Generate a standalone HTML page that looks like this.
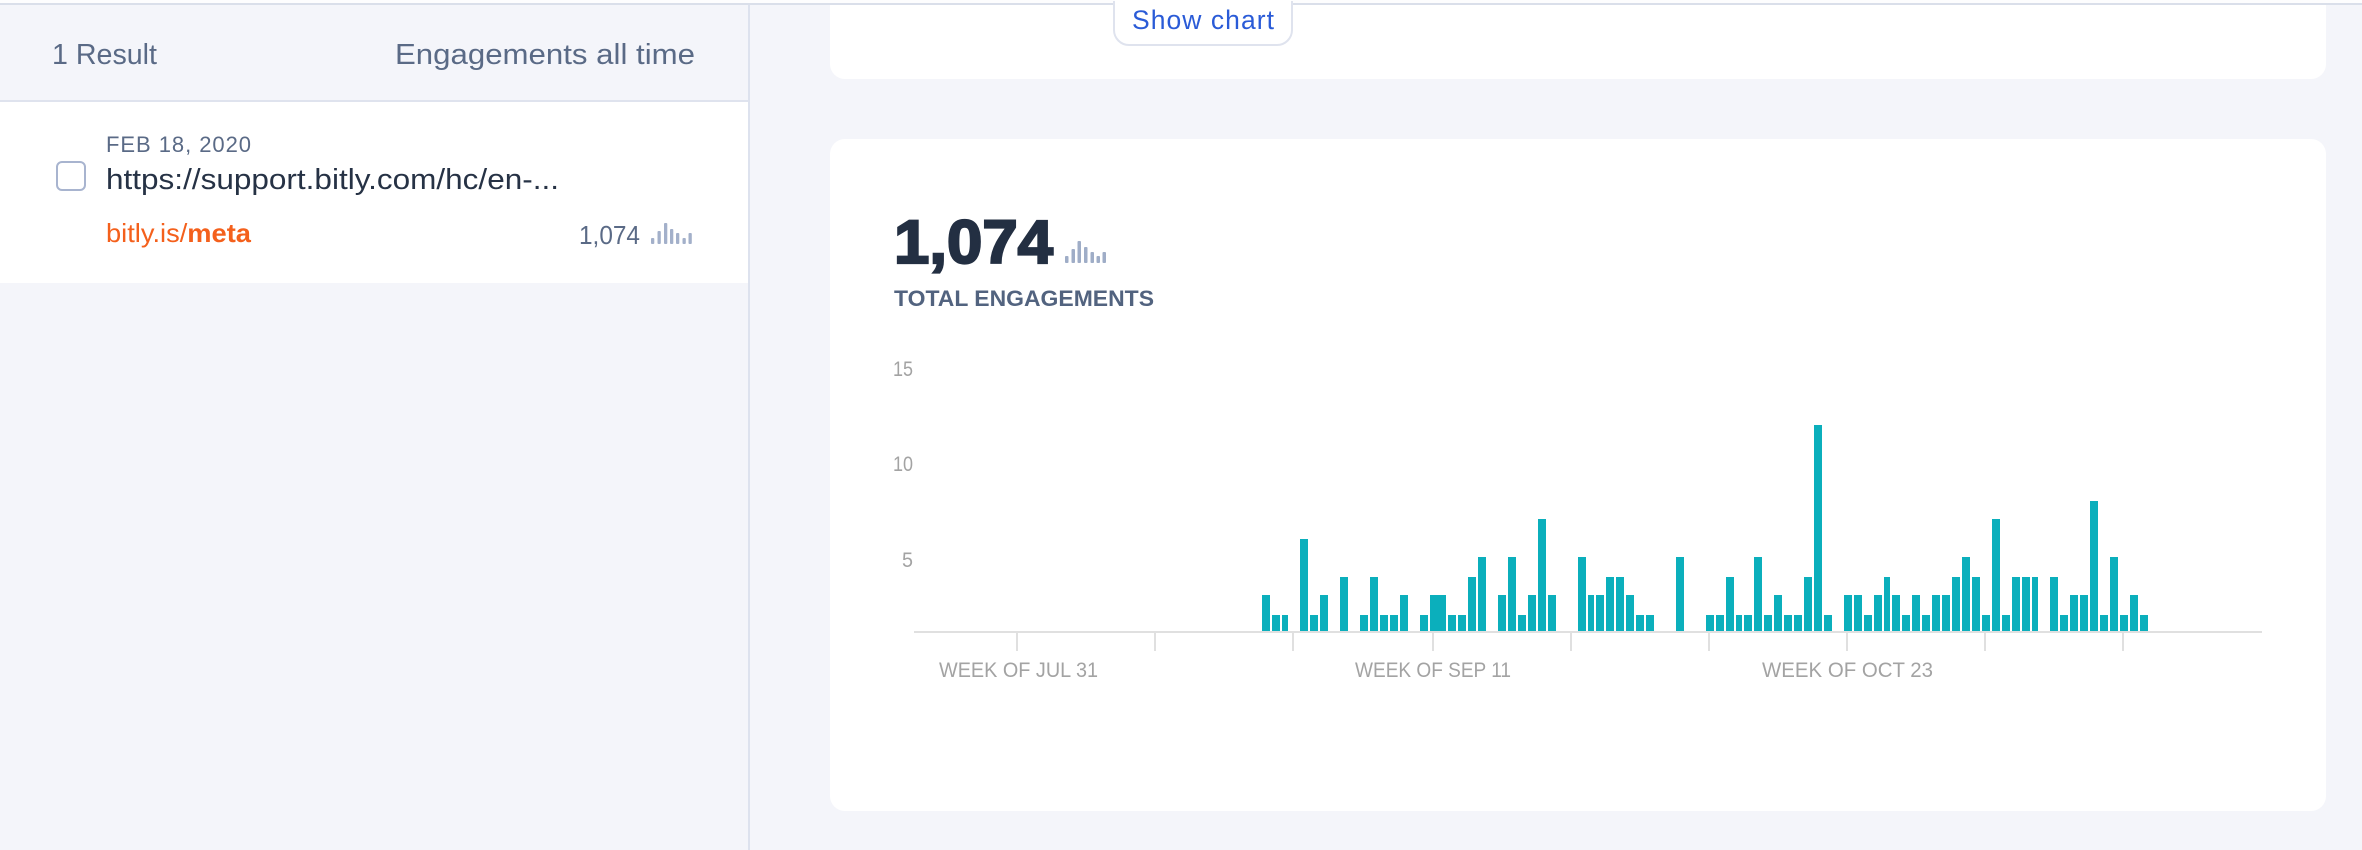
<!DOCTYPE html>
<html lang="en">
<head>
<meta charset="utf-8">
<title>Engagements</title>
<style>
html,body{margin:0;padding:0;width:2362px;height:850px;overflow:hidden;background:#f4f5fa}
svg{display:block;position:absolute;left:0;top:0}
text{font-family:"Liberation Sans",sans-serif}
</style>
</head>
<body>
<svg width="2362" height="850" viewBox="0 0 2362 850" xmlns="http://www.w3.org/2000/svg">
<rect x="0" y="0" width="2362" height="850" fill="#f4f5fa"/>
<rect x="0" y="0" width="2362" height="3" fill="#fdfdfe"/>
<rect x="0" y="3" width="2362" height="2" fill="#dadfea"/>
<rect x="748" y="5" width="2" height="845" fill="#dde2ee"/>
<rect x="0" y="100" width="748" height="2" fill="#dfe3ee"/>
<rect x="0" y="102" width="748" height="181" fill="#ffffff"/>
<text x="52" y="64" font-size="29" fill="#5a6a86" textLength="105" lengthAdjust="spacingAndGlyphs">1 Result</text>
<text x="395" y="64" font-size="29" fill="#5a6a86" textLength="300" lengthAdjust="spacingAndGlyphs">Engagements all time</text>
<text x="106" y="152" font-size="22" fill="#5a6a86" textLength="145" lengthAdjust="spacing">FEB 18, 2020</text>
<text x="106" y="189" font-size="29" fill="#263245" textLength="453" lengthAdjust="spacingAndGlyphs">https://support.bitly.com/hc/en-...</text>
<text x="106" y="242" font-size="26" fill="#f4601c" textLength="145" lengthAdjust="spacingAndGlyphs">bitly.is/<tspan font-weight="bold">meta</tspan></text>
<text x="579" y="244" font-size="26" fill="#5a6a86" textLength="61" lengthAdjust="spacingAndGlyphs">1,074</text>
<rect x="57" y="162" width="28" height="28" rx="5" ry="5" fill="#ffffff" stroke="#a8b4cf" stroke-width="2"/>
<g fill="#a3b0ca">
<rect x="651" y="238" width="3.3" height="6" rx="1"/><rect x="657.5" y="231" width="3.3" height="13" rx="1"/><rect x="664" y="223" width="3.3" height="21" rx="1"/><rect x="670" y="229" width="3.3" height="15" rx="1"/><rect x="676" y="233" width="3.3" height="11" rx="1"/><rect x="682.5" y="238" width="3.3" height="6" rx="1"/><rect x="688.5" y="233" width="3.3" height="11" rx="1"/>
</g>
<path d="M830 5H2326V64a15 15 0 0 1-15 15H845a15 15 0 0 1-15-15Z" fill="#ffffff"/>
<path d="M1114 1V30a15 15 0 0 0 15 15H1277a15 15 0 0 0 15-15V1" fill="#ffffff" stroke="#dfe3ee" stroke-width="2"/>
<rect x="1115" y="0" width="176" height="5" fill="#ffffff"/>
<text x="1132" y="29" font-size="26.5" fill="#2a5bd7" textLength="142" lengthAdjust="spacing">Show chart</text>
<rect x="830" y="139" width="1496" height="672" rx="15" ry="15" fill="#ffffff"/>
<text x="894" y="263" font-size="61" font-weight="bold" fill="#232f42" stroke="#232f42" stroke-width="2.2" textLength="159" lengthAdjust="spacingAndGlyphs">1,074</text>
<g fill="#9fadc7">
<rect x="1065" y="256" width="3.5" height="7" rx="1"/><rect x="1071.5" y="249" width="3.5" height="14" rx="1"/><rect x="1077.5" y="241" width="3.5" height="22" rx="1"/><rect x="1084" y="247" width="3.5" height="16" rx="1"/><rect x="1090.5" y="252" width="3.5" height="11" rx="1"/><rect x="1096.5" y="256" width="3.5" height="7" rx="1"/><rect x="1102.5" y="252" width="3.5" height="11" rx="1"/>
</g>
<text x="894" y="306" font-size="22" font-weight="bold" fill="#52637f" textLength="260" lengthAdjust="spacingAndGlyphs">TOTAL ENGAGEMENTS</text>
<g font-size="21" fill="#a3a3a3">
<text x="893" y="376" textLength="20" lengthAdjust="spacingAndGlyphs">15</text>
<text x="893" y="471" textLength="20" lengthAdjust="spacingAndGlyphs">10</text>
<text x="902" y="567" textLength="11" lengthAdjust="spacingAndGlyphs">5</text>
</g>
<g font-size="21" fill="#a3a3a3">
<text x="939" y="677" textLength="159" lengthAdjust="spacingAndGlyphs">WEEK OF JUL 31</text>
<text x="1355" y="677" textLength="156" lengthAdjust="spacingAndGlyphs">WEEK OF SEP 11</text>
<text x="1762" y="677" textLength="171" lengthAdjust="spacingAndGlyphs">WEEK OF OCT 23</text>
</g>
<rect x="914" y="631" width="1348" height="2" fill="#e0e0e0"/>
<g fill="#e0e0e0">
<rect x="1016" y="633" width="2" height="18"/><rect x="1154" y="633" width="2" height="18"/><rect x="1292" y="633" width="2" height="18"/><rect x="1432" y="633" width="2" height="18"/><rect x="1570" y="633" width="2" height="18"/><rect x="1708" y="633" width="2" height="18"/><rect x="1846" y="633" width="2" height="18"/><rect x="1984" y="633" width="2" height="18"/><rect x="2122" y="633" width="2" height="18"/>
</g>
<g fill="#0bafbc">
<rect x="1262" y="595" width="8" height="36"/>
<rect x="1272" y="615" width="8" height="16"/>
<rect x="1282" y="615" width="6" height="16"/>
<rect x="1300" y="539" width="8" height="92"/>
<rect x="1310" y="615" width="8" height="16"/>
<rect x="1320" y="595" width="8" height="36"/>
<rect x="1340" y="577" width="8" height="54"/>
<rect x="1360" y="615" width="8" height="16"/>
<rect x="1370" y="577" width="8" height="54"/>
<rect x="1380" y="615" width="8" height="16"/>
<rect x="1390" y="615" width="8" height="16"/>
<rect x="1400" y="595" width="8" height="36"/>
<rect x="1420" y="615" width="8" height="16"/>
<rect x="1430" y="595" width="16" height="36"/>
<rect x="1448" y="615" width="8" height="16"/>
<rect x="1458" y="615" width="8" height="16"/>
<rect x="1468" y="577" width="8" height="54"/>
<rect x="1478" y="557" width="8" height="74"/>
<rect x="1498" y="595" width="8" height="36"/>
<rect x="1508" y="557" width="8" height="74"/>
<rect x="1518" y="615" width="8" height="16"/>
<rect x="1528" y="595" width="8" height="36"/>
<rect x="1538" y="519" width="8" height="112"/>
<rect x="1548" y="595" width="8" height="36"/>
<rect x="1578" y="557" width="8" height="74"/>
<rect x="1588" y="595" width="6" height="36"/>
<rect x="1596" y="595" width="8" height="36"/>
<rect x="1606" y="577" width="8" height="54"/>
<rect x="1616" y="577" width="8" height="54"/>
<rect x="1626" y="595" width="8" height="36"/>
<rect x="1636" y="615" width="8" height="16"/>
<rect x="1646" y="615" width="8" height="16"/>
<rect x="1676" y="557" width="8" height="74"/>
<rect x="1706" y="615" width="8" height="16"/>
<rect x="1716" y="615" width="8" height="16"/>
<rect x="1726" y="577" width="8" height="54"/>
<rect x="1736" y="615" width="6" height="16"/>
<rect x="1744" y="615" width="8" height="16"/>
<rect x="1754" y="557" width="8" height="74"/>
<rect x="1764" y="615" width="8" height="16"/>
<rect x="1774" y="595" width="8" height="36"/>
<rect x="1784" y="615" width="8" height="16"/>
<rect x="1794" y="615" width="8" height="16"/>
<rect x="1804" y="577" width="8" height="54"/>
<rect x="1814" y="425" width="8" height="206"/>
<rect x="1824" y="615" width="8" height="16"/>
<rect x="1844" y="595" width="8" height="36"/>
<rect x="1854" y="595" width="8" height="36"/>
<rect x="1864" y="615" width="8" height="16"/>
<rect x="1874" y="595" width="8" height="36"/>
<rect x="1884" y="577" width="6" height="54"/>
<rect x="1892" y="595" width="8" height="36"/>
<rect x="1902" y="615" width="8" height="16"/>
<rect x="1912" y="595" width="8" height="36"/>
<rect x="1922" y="615" width="8" height="16"/>
<rect x="1932" y="595" width="8" height="36"/>
<rect x="1942" y="595" width="8" height="36"/>
<rect x="1952" y="577" width="8" height="54"/>
<rect x="1962" y="557" width="8" height="74"/>
<rect x="1972" y="577" width="8" height="54"/>
<rect x="1982" y="615" width="8" height="16"/>
<rect x="1992" y="519" width="8" height="112"/>
<rect x="2002" y="615" width="8" height="16"/>
<rect x="2012" y="577" width="8" height="54"/>
<rect x="2022" y="577" width="8" height="54"/>
<rect x="2032" y="577" width="6" height="54"/>
<rect x="2050" y="577" width="8" height="54"/>
<rect x="2060" y="615" width="8" height="16"/>
<rect x="2070" y="595" width="8" height="36"/>
<rect x="2080" y="595" width="8" height="36"/>
<rect x="2090" y="501" width="8" height="130"/>
<rect x="2100" y="615" width="8" height="16"/>
<rect x="2110" y="557" width="8" height="74"/>
<rect x="2120" y="615" width="8" height="16"/>
<rect x="2130" y="595" width="8" height="36"/>
<rect x="2140" y="615" width="8" height="16"/>
</g>
</svg>
</body>
</html>
